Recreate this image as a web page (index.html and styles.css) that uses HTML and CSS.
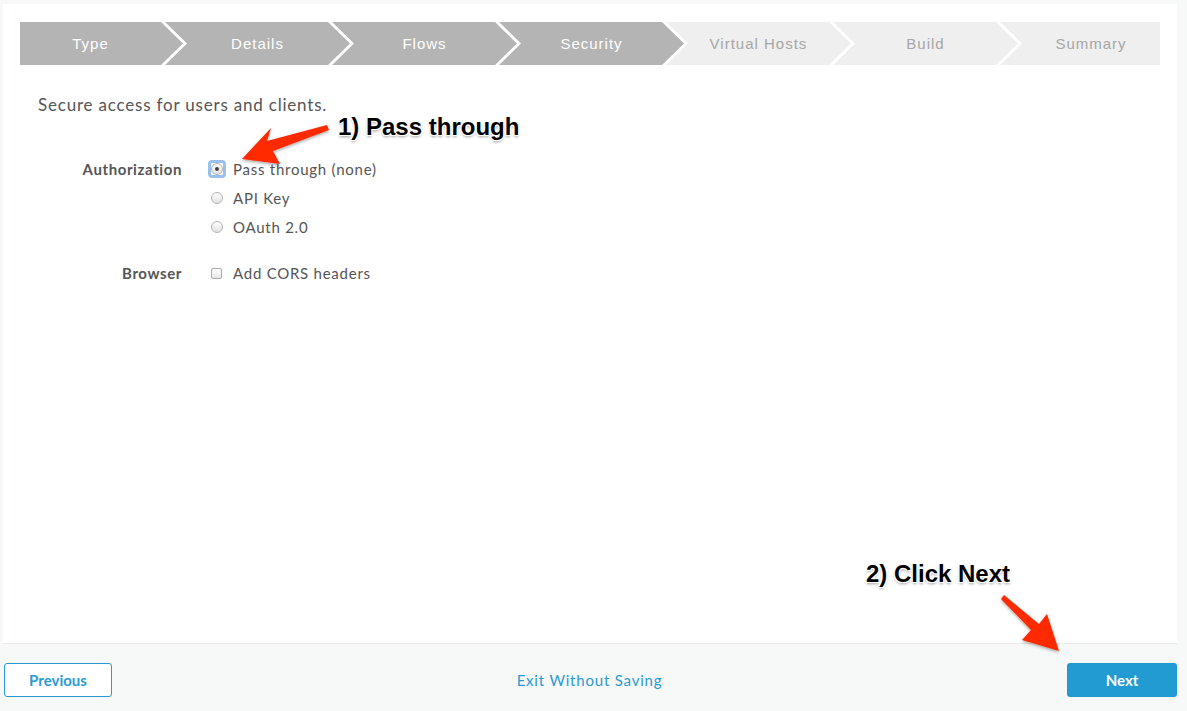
FILE: index.html
```html
<!DOCTYPE html>
<html>
<head>
<meta charset="utf-8">
<link rel="stylesheet" href="styles.css">
</head>
<body>
<div class="card">
  <div class="wizard">
    <div class="step done first">Type</div>
    <div class="step done">Details</div>
    <div class="step done">Flows</div>
    <div class="step done">Security</div>
    <div class="step todo">Virtual Hosts</div>
    <div class="step todo">Build</div>
    <div class="step todo last">Summary</div>
  </div>
  <p class="intro">Secure access for users and clients.</p>
  <div class="form">
    <div class="label">Authorization</div>
    <div class="options">
      <label class="opt"><span class="radio checked"><span class="dot"></span></span>Pass through (none)</label>
      <label class="opt"><span class="radio"></span>API Key</label>
      <label class="opt"><span class="radio"></span>OAuth 2.0</label>
    </div>
    <div class="label browser">Browser</div>
    <div class="options browser">
      <label class="opt"><span class="check"></span>Add CORS headers</label>
    </div>
  </div>
</div>
<div class="footer">
  <button class="btn prev">Previous</button>
  <a class="exit">Exit Without Saving</a>
  <button class="btn next">Next</button>
</div>

<div class="note note1">1) Pass through</div>
<div class="note note2">2) Click Next</div>
<svg class="arrows" width="1187" height="711" viewBox="0 0 1187 711">
  <defs>
    <filter id="sh" x="-20%" y="-20%" width="140%" height="140%">
      <feDropShadow dx="0" dy="1.5" stdDeviation="1.5" flood-color="#000" flood-opacity="0.35"/>
    </filter>
  </defs>
  <polygon filter="url(#sh)" fill="#ff2a00" points="242,159 271,128 267,141 327,125 329,130 273,151 280,164"/>
  <polygon filter="url(#sh)" fill="#ff2a00" points="1059,651 1047,614 1039,624 1004,595 1001,599 1031,630 1022,640"/>
</svg>
</body>
</html>
```
FILE: styles.css
```css
html, body {
  margin: 0;
  padding: 0;
}
body {
  background: #f7f8f8;
  font-family: Lato, "Open Sans", sans-serif;
  color: #4d4d4d;
  padding: 4px 10px 0 3px;
  width: 1174px;
  height: 707px;
  overflow: hidden;
  position: relative;
}
.card {
  background: #fff;
  height: 640px;
  box-sizing: border-box;
  border-bottom: 1px solid #ebebeb;
  padding: 18px 17px 0 17px;
}
.wizard {
  display: flex;
  height: 43px;
}
.step {
  flex: 0 0 185px;
  margin-left: -18px;
  box-sizing: border-box;
  padding: 0 22px 1px;
  display: flex;
  align-items: center;
  justify-content: center;
  font-family: "Liberation Sans", Arial, sans-serif;
  font-size: 15px;
  letter-spacing: 1px;
  clip-path: polygon(0 0, calc(100% - 22px) 0, 100% 50%, calc(100% - 22px) 100%, 0 100%, 22px 50%);
}
.step.first {
  flex-basis: 163px;
  margin-left: 0;
  padding-left: 0;
  clip-path: polygon(0 0, calc(100% - 22px) 0, 100% 50%, calc(100% - 22px) 100%, 0 100%);
}
.step.last {
  flex: 1 1 auto;
  padding-right: 0;
  clip-path: polygon(0 0, 100% 0, 100% 100%, 0 100%, 22px 50%);
}
.step.done {
  background: #b4b4b4;
  color: #fff;
}
.step.todo {
  background: #efefef;
  color: #a6a6a6;
}
.intro {
  margin: 29px 0 0 18px;
  font-size: 17px;
  line-height: 22px;
  letter-spacing: 0.8px;
  color: #555;
}
.form {
  display: grid;
  grid-template-columns: 162px auto;
  column-gap: 28px;
  margin-top: 43px;
  font-size: 15px;
}
.label {
  text-align: right;
  font-weight: bold;
  line-height: 20px;
  letter-spacing: 0.6px;
  color: #555;
}
.options {
  display: flex;
  flex-direction: column;
  gap: 9px;
}
.label.browser, .options.browser {
  margin-top: 26px;
}
.opt {
  display: flex;
  align-items: center;
  line-height: 20px;
  letter-spacing: 0.75px;
  color: #555;
}
.radio {
  width: 12px;
  height: 12px;
  box-sizing: border-box;
  border-radius: 50%;
  border: 1px solid #b3b3b3;
  background: linear-gradient(#fdfdfd, #e2e2e2);
  margin: 0 10px 0 1px;
  display: flex;
  align-items: center;
  justify-content: center;
}
.radio.checked {
  position: relative;
}
.radio.checked::before {
  content: "";
  position: absolute;
  left: -4px;
  top: -4px;
  right: -4px;
  bottom: -4px;
  border-radius: 4px;
  border: 3px solid #8fb9ec;
  box-sizing: border-box;
  opacity: 0.9;
}
.dot {
  width: 4px;
  height: 4px;
  border-radius: 50%;
  background: #444;
}
.check {
  width: 11px;
  height: 11px;
  box-sizing: border-box;
  border: 1px solid #aaa;
  border-radius: 2px;
  background: linear-gradient(#fdfdfd, #e6e6e6);
  margin: 0 11px 0 1px;
}
.footer {
  display: flex;
  justify-content: space-between;
  align-items: center;
  padding: 19px 0 0 1px;
}
.btn {
  height: 34px;
  box-sizing: border-box;
  border-radius: 3px;
  font-family: Lato, sans-serif;
  font-weight: bold;
  font-size: 15px;
}
.prev {
  width: 108px;
  background: #fff;
  border: 1px solid #2a9bd1;
  color: #2a9bd1;
}
.next {
  width: 110px;
  background: #219bd2;
  border: none;
  color: #fff;
}
.exit {
  color: #2a9bd1;
  font-size: 15px;
  letter-spacing: 0.8px;
}
.note {
  position: absolute;
  font-family: "Liberation Sans", Arial, sans-serif;
  font-weight: bold;
  font-size: 24px;
  color: #000;
  white-space: nowrap;
  text-shadow: -1px -1px 0 #fff, 1px -1px 0 #fff, -1px 1px 0 #fff, 1px 1px 0 #fff, 0 2px 3px rgba(0,0,0,0.4);
}
.note1 {
  left: 338px;
  top: 113px;
}
.note2 {
  left: 866px;
  top: 560px;
}
.arrows {
  position: absolute;
  left: 0;
  top: 0;
  pointer-events: none;
}
```
